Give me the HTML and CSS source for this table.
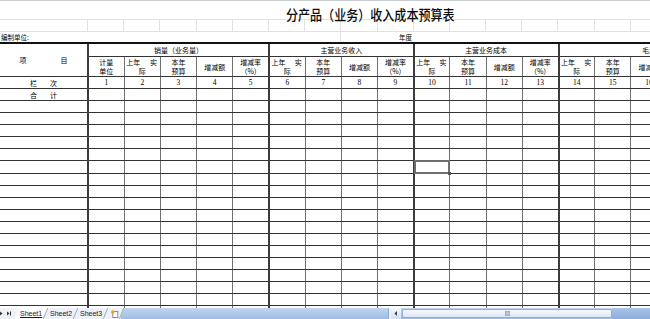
FILE: index.html
```html
<!DOCTYPE html>
<html lang="zh-CN">
<head>
<meta charset="utf-8">
<title>分产品（业务）收入成本预算表</title>
<link rel="stylesheet" href="styles.css">
</head>
<body>
<div class="sheet">
  <div class="title-row"><span class="title">分产品（业务）收入成本预算表</span></div>
  <div class="grid-row">
    <span class="gc gc0"></span><span class="gc"></span><span class="gc"></span><span class="gc"></span><span class="gc"></span><span class="gc"></span><span class="gc"></span><span class="gc"></span><span class="gc"></span><span class="gc"></span><span class="gc"></span><span class="gc"></span><span class="gc"></span><span class="gc"></span><span class="gc"></span><span class="gc"></span><span class="gc"></span>
  </div>
  <div class="info-row">
    <span class="unit">编制单位:</span>
    <span class="year">年度</span>
  </div>
  <table class="budget">
    <colgroup>
      <col class="w0">
      <col class="w g"><col class="w"><col class="w"><col class="w"><col class="w">
      <col class="w g"><col class="w"><col class="w"><col class="w">
      <col class="w g"><col class="w"><col class="w"><col class="w">
      <col class="w g"><col class="w"><col class="w"><col class="w"><col class="w">
    </colgroup>
    <tr class="h1">
      <td rowspan="2" class="item"><div class="spaced wide"><span>项</span><span>目</span></div></td>
      <td colspan="5">销量（业务量）</td>
      <td colspan="4">主营业务收入</td>
      <td colspan="4">主营业务成本</td>
      <td colspan="5">毛利</td>
    </tr>
    <tr class="h2">
      <td><div class="two"><span>计量</span><span>单位</span></div></td>
      <td><div class="two"><span class="split"><span>上年</span><span>实</span></span><span>际</span></div></td>
      <td><div class="two"><span>本年</span><span>预算</span></div></td>
      <td>增减额</td>
      <td><div class="two"><span>增减率</span><span>（%）</span></div></td>
      <td><div class="two"><span class="split"><span>上年</span><span>实</span></span><span>际</span></div></td>
      <td><div class="two"><span>本年</span><span>预算</span></div></td>
      <td>增减额</td>
      <td><div class="two"><span>增减率</span><span>（%）</span></div></td>
      <td><div class="two"><span class="split"><span>上年</span><span>实</span></span><span>际</span></div></td>
      <td><div class="two"><span>本年</span><span>预算</span></div></td>
      <td>增减额</td>
      <td><div class="two"><span>增减率</span><span>（%）</span></div></td>
      <td><div class="two"><span class="split"><span>上年</span><span>实</span></span><span>际</span></div></td>
      <td><div class="two"><span>本年</span><span>预算</span></div></td>
      <td>增减额</td>
      <td><div class="two"><span>增减率</span><span>（%）</span></div></td>
      <td></td>
    </tr>
    <tr class="num">
      <td class="item"><div class="spaced"><span>栏</span><span>次</span></div></td>
      <td>1</td><td>2</td><td>3</td><td>4</td><td>5</td><td>6</td><td>7</td><td>8</td><td>9</td><td>10</td><td>11</td><td>12</td><td>13</td><td>14</td><td>15</td><td>16</td><td>17</td><td>18</td>
    </tr>
    <tr class="row">
      <td class="item"><div class="spaced"><span>合</span><span>计</span></div></td>
      <td></td><td></td><td></td><td></td><td></td><td></td><td></td><td></td><td></td><td></td><td></td><td></td><td></td><td></td><td></td><td></td><td></td><td></td>
    </tr>
    <tr class="row"><td></td><td></td><td></td><td></td><td></td><td></td><td></td><td></td><td></td><td></td><td></td><td></td><td></td><td></td><td></td><td></td><td></td><td></td><td></td></tr>
    <tr class="row"><td></td><td></td><td></td><td></td><td></td><td></td><td></td><td></td><td></td><td></td><td></td><td></td><td></td><td></td><td></td><td></td><td></td><td></td><td></td></tr>
    <tr class="row"><td></td><td></td><td></td><td></td><td></td><td></td><td></td><td></td><td></td><td></td><td></td><td></td><td></td><td></td><td></td><td></td><td></td><td></td><td></td></tr>
    <tr class="row"><td></td><td></td><td></td><td></td><td></td><td></td><td></td><td></td><td></td><td></td><td></td><td></td><td></td><td></td><td></td><td></td><td></td><td></td><td></td></tr>
    <tr class="row"><td></td><td></td><td></td><td></td><td></td><td></td><td></td><td></td><td></td><td></td><td></td><td></td><td></td><td></td><td></td><td></td><td></td><td></td><td></td></tr>
    <tr class="row"><td></td><td></td><td></td><td></td><td></td><td></td><td></td><td></td><td></td><td></td><td class="sel"></td><td></td><td></td><td></td><td></td><td></td><td></td><td></td><td></td></tr>
    <tr class="row"><td></td><td></td><td></td><td></td><td></td><td></td><td></td><td></td><td></td><td></td><td></td><td></td><td></td><td></td><td></td><td></td><td></td><td></td><td></td></tr>
    <tr class="row"><td></td><td></td><td></td><td></td><td></td><td></td><td></td><td></td><td></td><td></td><td></td><td></td><td></td><td></td><td></td><td></td><td></td><td></td><td></td></tr>
    <tr class="row"><td></td><td></td><td></td><td></td><td></td><td></td><td></td><td></td><td></td><td></td><td></td><td></td><td></td><td></td><td></td><td></td><td></td><td></td><td></td></tr>
    <tr class="row"><td></td><td></td><td></td><td></td><td></td><td></td><td></td><td></td><td></td><td></td><td></td><td></td><td></td><td></td><td></td><td></td><td></td><td></td><td></td></tr>
    <tr class="row"><td></td><td></td><td></td><td></td><td></td><td></td><td></td><td></td><td></td><td></td><td></td><td></td><td></td><td></td><td></td><td></td><td></td><td></td><td></td></tr>
    <tr class="row"><td></td><td></td><td></td><td></td><td></td><td></td><td></td><td></td><td></td><td></td><td></td><td></td><td></td><td></td><td></td><td></td><td></td><td></td><td></td></tr>
    <tr class="row"><td></td><td></td><td></td><td></td><td></td><td></td><td></td><td></td><td></td><td></td><td></td><td></td><td></td><td></td><td></td><td></td><td></td><td></td><td></td></tr>
    <tr class="row"><td></td><td></td><td></td><td></td><td></td><td></td><td></td><td></td><td></td><td></td><td></td><td></td><td></td><td></td><td></td><td></td><td></td><td></td><td></td></tr>
    <tr class="row"><td></td><td></td><td></td><td></td><td></td><td></td><td></td><td></td><td></td><td></td><td></td><td></td><td></td><td></td><td></td><td></td><td></td><td></td><td></td></tr>
    <tr class="row"><td></td><td></td><td></td><td></td><td></td><td></td><td></td><td></td><td></td><td></td><td></td><td></td><td></td><td></td><td></td><td></td><td></td><td></td><td></td></tr>
    <tr class="row"><td></td><td></td><td></td><td></td><td></td><td></td><td></td><td></td><td></td><td></td><td></td><td></td><td></td><td></td><td></td><td></td><td></td><td></td><td></td></tr>
    <tr class="row"><td></td><td></td><td></td><td></td><td></td><td></td><td></td><td></td><td></td><td></td><td></td><td></td><td></td><td></td><td></td><td></td><td></td><td></td><td></td></tr>
  </table>
</div>
<div class="tabbar">
  <div class="nav">
    <svg width="15" height="11" viewBox="0 0 15 11"><path d="M0 3.5 L2.5 5.5 L0 7.5 Z" fill="#333"/><path d="M7 3.5 L9.5 5.5 L7 7.5 Z" fill="#333"/><rect x="10" y="3.5" width="1" height="4" fill="#333"/></svg>
  </div>
  <div class="tabs">
    <span class="tab active"><span class="tab-label">Sheet1</span></span>
    <span class="tab"><span class="tab-label">Sheet2</span></span>
    <span class="tab"><span class="tab-label">Sheet3</span></span>
    <span class="tab newtab"><span class="tab-label"><svg width="9" height="8" viewBox="0 0 9 8"><rect x="2.5" y="1.5" width="5" height="6" fill="#fff" stroke="#8a8a8a"/><circle cx="2.5" cy="2" r="1.8" fill="#f0a020"/></svg></span></span>
  </div>
  <div class="hfill"></div>
  <div class="hscroll">
    <span class="sep"></span>
    <span class="arrow"><svg width="8" height="9" viewBox="0 0 8 9"><path d="M5 2 L2.5 4.5 L5 7 Z" fill="#2b3a55"/></svg></span>
    <span class="thumb"><span class="grip"></span></span>
  </div>
  <div class="hrest"></div>
</div>
</body>
</html>
```
FILE: styles.css
```css
html, body {
  margin: 0;
  padding: 0;
}
body {
  width: 650px;
  height: 319px;
  overflow: hidden;
  background: #ffffff;
  font-family: "Noto Sans CJK SC", "Liberation Sans", sans-serif;
  color: #000;
}

.sheet {
  height: 308px;
  overflow: hidden;
  border-top: 1px solid #c9ccd1;
  box-sizing: border-box;
}

.title-row {
  height: 18px;
  border-bottom: 1px solid #dfe2e6;
  padding-left: 286px;
  white-space: nowrap;
}
.title {
  display: inline-block;
  font-size: 14px;
  font-weight: 500;
  line-height: 14px;
  padding-top: 4px;
  transform: scaleX(0.86);
  transform-origin: 0 0;
  color: #0a0a0a;
}

.grid-row {
  display: flex;
  height: 11px;
  border-bottom: 1px solid #dfe2e6;
}
.gc {
  flex: none;
  width: 36.2px;
  box-sizing: border-box;
  border-right: 1px solid #dfe2e6;
}
.gc0 {
  width: 88px;
}

.info-row {
  display: flex;
  height: 10px;
  font-size: 6.5px;
  line-height: 10px;
  white-space: nowrap;
}
.unit {
  flex: none;
  width: 341px;
  box-sizing: border-box;
  padding-left: 1px;
  border-right: 1px solid #dfe2e6;
}
.year {
  padding-left: 58px;
}

.budget {
  border-collapse: collapse;
  table-layout: fixed;
  width: 739.6px;
}
.budget col.w0 { width: 88px; }
.budget col.w { width: 36.2px; }
.budget col.g { border-left: 2px solid #3c3c3c; }

.budget td {
  padding: 0;
  border-top: 1px solid #333;
  border-bottom: 1px solid #333;
  border-left: 1px solid #707070;
  border-right: 1px solid #707070;
  font-size: 7px;
  line-height: 8px;
  text-align: center;
  vertical-align: middle;
  white-space: nowrap;
  overflow: hidden;
}
.budget tr td:first-child {
  border-left: none;
}
.budget tr.h1 td {
  border-top: 2px solid #111;
  height: 12px;
}
.budget tr.h2 td {
  height: 19px;
}
.budget tr.num td {
  height: 11px;
  font-family: "Liberation Serif", serif;
  font-size: 7.5px;
}
.budget tr.num td.item,
.budget tr.row td.item {
  font-family: "Noto Sans CJK SC", sans-serif;
  font-size: 7px;
}
.budget tr.row td {
  height: 11.08px;
}

.two {
  display: flex;
  flex-direction: column;
  align-items: center;
  line-height: 9px;
}
.split {
  display: flex;
  justify-content: space-between;
  align-self: stretch;
  padding: 0 3px 0 1.5px;
}
.spaced {
  display: flex;
  justify-content: center;
  gap: 13px;
}
.spaced.wide {
  gap: 34px;
}

.budget td.sel {
  position: relative;
  overflow: visible;
}
.budget td.sel::after {
  content: "";
  position: absolute;
  left: -1px;
  top: -1px;
  right: -1px;
  bottom: -1px;
  border: 2px solid #6e6e6e;
}
.budget td.sel::before {
  content: "";
  position: absolute;
  right: -2px;
  bottom: -2px;
  width: 3px;
  height: 3px;
  background: #555;
  z-index: 1;
}

/* tab bar */
.tabbar {
  display: flex;
  height: 11px;
  background: #eef1f6;
  font-family: "Liberation Sans", sans-serif;
  font-size: 7px;
  line-height: 11px;
  overflow: hidden;
}
.nav {
  flex: none;
  width: 15px;
  display: flex;
  align-items: center;
}
.tabs {
  flex: none;
  width: 106px;
  display: flex;
  padding-left: 2px;
  box-sizing: border-box;
  background: #f2f4f8;
}
.tab {
  flex: none;
  width: 28px;
  margin-right: 1px;
  transform: skewX(-22deg);
  border-right: 1px solid #9aa6b8;
  background: #eef2f8;
  text-align: center;
}
.tab.active {
  background: #ffffff;
}
.tab-label {
  display: inline-block;
  transform: skewX(22deg);
  color: #1a1a1a;
}
.tab.active .tab-label {
  text-decoration: underline;
}
.newtab {
  width: 14px;
}
.newtab svg {
  display: block;
  margin-top: 1.5px;
}
.hfill {
  flex: none;
  width: 267px;
  background: linear-gradient(#c2d5ef, #9fbbe4);
}
.hscroll {
  flex: none;
  width: 224px;
  display: flex;
  background: linear-gradient(#c2d5ef, #9fbbe4);
}
.sep {
  flex: none;
  width: 2px;
  background: #eef3fa;
  border-left: 1px solid #8fa8cf;
}
.arrow {
  flex: none;
  width: 10px;
  display: flex;
  align-items: center;
  justify-content: center;
  background: linear-gradient(#f4f7fc, #d3e0f2);
}
.thumb {
  flex: none;
  width: 210px;
  margin: 1px 0 1px 1px;
  box-sizing: border-box;
  border: 1px solid #93add4;
  border-radius: 2px;
  background: linear-gradient(#f7f9fd, #dbe6f5);
  display: flex;
  align-items: center;
  justify-content: center;
}
.grip {
  width: 3px;
  height: 3px;
  background: #b8c6d9;
  border: 1px solid #9fb0c7;
}
.hrest {
  flex: 1;
  background: linear-gradient(#a9c3e8, #8dadda);
}
```
